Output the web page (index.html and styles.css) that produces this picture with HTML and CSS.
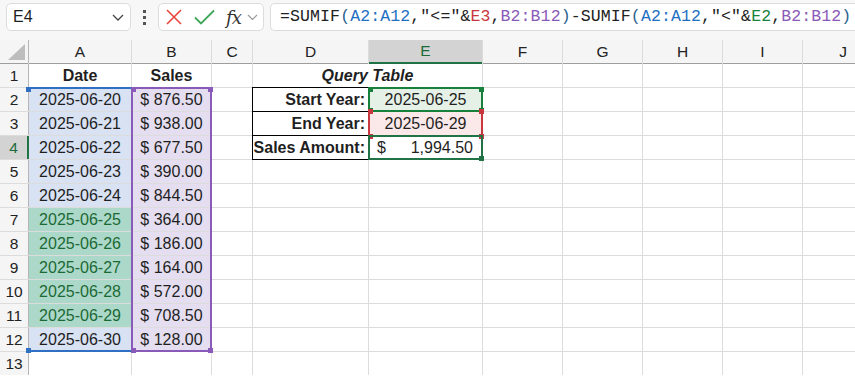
FILE: index.html
```html
<!DOCTYPE html>
<html lang="en">
<head>
    <meta charset="UTF-8">
    <meta name="viewport" content="width=device-width, initial-scale=1.0">
    <title>SUMIF date range</title>
    <link rel="stylesheet" href="styles.css">
</head>
<body>
    <div class="formula-bar">
        <div class="name-box">
            <span>E4</span>
            <svg class="chev" width="12" height="7" viewBox="0 0 12 7"><path d="M1 1l5 5 5-5" fill="none" stroke="#444" stroke-width="1.3"/></svg>
        </div>
        <div class="dots"><i></i><i></i><i></i></div>
        <div class="fx-box">
            <svg width="16" height="16" viewBox="0 0 16 16"><path d="M1 1l14 14M15 1L1 15" stroke="#e8453c" stroke-width="1.6"/></svg>
            <svg width="21" height="16" viewBox="0 0 21 16"><path d="M1 8.5l6 6L20 1.5" fill="none" stroke="#3fa75a" stroke-width="1.8"/></svg>
            <span class="fx">fx</span>
            <svg width="11" height="7" viewBox="0 0 11 7"><path d="M1 1l4.5 4.5L10 1" fill="none" stroke="#999" stroke-width="1.2"/></svg>
        </div>
        <div class="formula">=SUMIF<span class="p">(</span><span class="ref-a">A2:A12</span>,"&lt;="&amp;<span class="ref-e3">E3</span>,<span class="ref-b">B2:B12</span><span class="p">)</span>-SUMIF<span class="p">(</span><span class="ref-a">A2:A12</span>,"&lt;"&amp;<span class="ref-e2">E2</span>,<span class="ref-b">B2:B12</span><span class="p">)</span></div>
    </div>

    <div class="sheet-wrap">
        <div class="sheet">
            <!-- column headers -->
            <div class="hd corner"><svg width="17" height="16" viewBox="0 0 17 16"><path d="M17 0V16H0Z" fill="#bdbdbd"/></svg></div>
            <div class="hd col">A</div>
            <div class="hd col">B</div>
            <div class="hd col">C</div>
            <div class="hd col">D</div>
            <div class="hd col active">E</div>
            <div class="hd col">F</div>
            <div class="hd col">G</div>
            <div class="hd col">H</div>
            <div class="hd col">I</div>
            <div class="hd col">J</div>

            <!-- row 1 -->
            <div class="hd row">1</div>
            <div class="c bold center">Date</div>
            <div class="c bold center">Sales</div>
            <div class="c"></div>
            <div class="c bold italic center span2">Query Table</div>
            <div class="c"></div><div class="c"></div><div class="c"></div><div class="c"></div><div class="c"></div>

            <!-- row 2 -->
            <div class="hd row">2</div>
            <div class="c date">2025-06-20</div>
            <div class="c sale">$ 876.50</div>
            <div class="c"></div>
            <div class="c label">Start Year:</div>
            <div class="c center start">2025-06-25</div>
            <div class="c"></div><div class="c"></div><div class="c"></div><div class="c"></div><div class="c"></div>

            <!-- row 3 -->
            <div class="hd row">3</div>
            <div class="c date">2025-06-21</div>
            <div class="c sale">$ 938.00</div>
            <div class="c"></div>
            <div class="c label">End Year:</div>
            <div class="c center end">2025-06-29</div>
            <div class="c"></div><div class="c"></div><div class="c"></div><div class="c"></div><div class="c"></div>

            <!-- row 4 -->
            <div class="hd row active">4</div>
            <div class="c date">2025-06-22</div>
            <div class="c sale">$ 677.50</div>
            <div class="c"></div>
            <div class="c label">Sales Amount:</div>
            <div class="c money"><span>$</span><span>1,994.50</span></div>
            <div class="c"></div><div class="c"></div><div class="c"></div><div class="c"></div><div class="c"></div>

            <!-- row 5 -->
            <div class="hd row">5</div>
            <div class="c date">2025-06-23</div>
            <div class="c sale">$ 390.00</div>
            <div class="c"></div><div class="c"></div><div class="c"></div><div class="c"></div><div class="c"></div><div class="c"></div><div class="c"></div><div class="c"></div>

            <!-- row 6 -->
            <div class="hd row">6</div>
            <div class="c date">2025-06-24</div>
            <div class="c sale">$ 844.50</div>
            <div class="c"></div><div class="c"></div><div class="c"></div><div class="c"></div><div class="c"></div><div class="c"></div><div class="c"></div><div class="c"></div>

            <!-- row 7 -->
            <div class="hd row">7</div>
            <div class="c date hit">2025-06-25</div>
            <div class="c sale">$ 364.00</div>
            <div class="c"></div><div class="c"></div><div class="c"></div><div class="c"></div><div class="c"></div><div class="c"></div><div class="c"></div><div class="c"></div>

            <!-- row 8 -->
            <div class="hd row">8</div>
            <div class="c date hit">2025-06-26</div>
            <div class="c sale">$ 186.00</div>
            <div class="c"></div><div class="c"></div><div class="c"></div><div class="c"></div><div class="c"></div><div class="c"></div><div class="c"></div><div class="c"></div>

            <!-- row 9 -->
            <div class="hd row">9</div>
            <div class="c date hit">2025-06-27</div>
            <div class="c sale">$ 164.00</div>
            <div class="c"></div><div class="c"></div><div class="c"></div><div class="c"></div><div class="c"></div><div class="c"></div><div class="c"></div><div class="c"></div>

            <!-- row 10 -->
            <div class="hd row">10</div>
            <div class="c date hit">2025-06-28</div>
            <div class="c sale">$ 572.00</div>
            <div class="c"></div><div class="c"></div><div class="c"></div><div class="c"></div><div class="c"></div><div class="c"></div><div class="c"></div><div class="c"></div>

            <!-- row 11 -->
            <div class="hd row">11</div>
            <div class="c date hit">2025-06-29</div>
            <div class="c sale">$ 708.50</div>
            <div class="c"></div><div class="c"></div><div class="c"></div><div class="c"></div><div class="c"></div><div class="c"></div><div class="c"></div><div class="c"></div>

            <!-- row 12 -->
            <div class="hd row">12</div>
            <div class="c date">2025-06-30</div>
            <div class="c sale">$ 128.00</div>
            <div class="c"></div><div class="c"></div><div class="c"></div><div class="c"></div><div class="c"></div><div class="c"></div><div class="c"></div><div class="c"></div>

            <!-- row 13 -->
            <div class="hd row">13</div>
            <div class="c"></div><div class="c"></div><div class="c"></div><div class="c"></div><div class="c"></div><div class="c"></div><div class="c"></div><div class="c"></div><div class="c"></div><div class="c"></div>
        </div>

        <!-- formula reference highlights, drawn over the cells -->
        <div class="overlay">
            <div class="range range-a"><i class="tl"></i><i class="bl"></i></div>
            <div class="range range-b"><i class="tl"></i><i class="tr"></i><i class="bl"></i><i class="br"></i></div>
            <div class="range range-e2"><i class="tl"></i><i class="tr"></i><i class="bl"></i><i class="br"></i></div>
            <div class="range range-e3"><i class="tl"></i><i class="tr"></i><i class="bl"></i><i class="br"></i></div>
            <div class="range range-e4"><i class="br"></i></div>
        </div>
    </div>
</body>
</html>
```

FILE: styles.css
```css
body {
    margin: 0;
    padding: 0;
    width: 855px;
    height: 379px;
    overflow: hidden;
    background-color: #ffffff;
    font-family: "Liberation Sans", Arial, sans-serif;
    color: #1f1f1f;
}

/* formula bar */

.formula-bar {
    height: 40px;
    display: flex;
    align-items: flex-start;
    padding: 3px 0 0 6px;
    box-sizing: border-box;
    background-color: #f7f7f7;
    white-space: nowrap;
}

.name-box {
    width: 125px;
    height: 28px;
    box-sizing: border-box;
    border: 1px solid #dcdcdc;
    border-radius: 5px;
    background-color: #fff;
    display: flex;
    align-items: center;
    justify-content: space-between;
    padding: 0 6px 0 6px;
    font-size: 16px;
}

.dots {
    width: 27px;
    height: 28px;
    display: flex;
    flex-direction: column;
    align-items: center;
    justify-content: center;
    gap: 3px;
}

.dots i {
    display: block;
    width: 3px;
    height: 3px;
    background-color: #555;
}

.fx-box {
    width: 106px;
    height: 28px;
    box-sizing: border-box;
    border: 1px solid #dcdcdc;
    border-radius: 5px;
    background-color: #fff;
    display: flex;
    align-items: center;
    padding-left: 7px;
    gap: 12px;
}

.fx-box .fx {
    font-family: "DejaVu Serif", "Liberation Serif", serif;
    font-style: italic;
    font-size: 18px;
    color: #333;
    margin-left: -1px;
    margin-right: -6px;
    letter-spacing: -1px;
}

.formula {
    margin-left: 6px;
    flex: 1;
    height: 28px;
    box-sizing: border-box;
    border: 1px solid #dcdcdc;
    border-right: none;
    border-radius: 5px 0 0 5px;
    background-color: #fff;
    font-family: "Liberation Mono", "DejaVu Sans Mono", monospace;
    font-size: 16.5px;
    letter-spacing: 0.12px;
    line-height: 26px;
    padding-left: 9px;
    color: #222;
    overflow: hidden;
}

.formula .p { color: #2a5f8f; }
.ref-a { color: #1e6fc2; }
.ref-b { color: #8a5ab8; }
.ref-e3 { color: #c8363e; }
.ref-e2 { color: #17823c; }

/* grid */

.sheet-wrap {
    position: relative;
}

.sheet,
.overlay {
    display: grid;
    grid-template-columns: 28px 102px 79px 40px 115px 113px 79px 79px 79px 79px 80px;
    grid-auto-rows: 23px;
    gap: 1px;
}

.sheet {
    background-color: #dcdcdc;
    font-size: 16px;
}

.overlay {
    position: absolute;
    top: 0;
    left: 0;
    pointer-events: none;
}

.hd {
    background-color: #f5f5f5;
    display: flex;
    align-items: center;
    justify-content: center;
    font-size: 15.5px;
    color: #222;
}

.hd.col {
    box-shadow: 0 1px 0 #9e9e9e;
}

.hd.row {
    box-shadow: 1px 0 0 #b5b5b5;
}

.corner {
    box-shadow: 0 1px 0 #9e9e9e, 1px 0 0 #b5b5b5;
    align-items: flex-end;
    justify-content: flex-end;
    padding: 0 3px 3px 0;
    box-sizing: border-box;
}

.corner svg {
    display: block;
}

.hd.col.active {
    background-color: #d3d3d3;
    color: #1e6b3a;
    box-shadow: 0 1px 0 #217346;
    border-bottom: 1px solid #217346;
}

.hd.row.active {
    background-color: #d3d3d3;
    color: #1e6b3a;
    box-shadow: 1px 0 0 #217346;
    border-right: 1px solid #217346;
}

.c {
    background-color: #fff;
    display: flex;
    align-items: center;
    white-space: nowrap;
    overflow: hidden;
}

.center { justify-content: center; }
.bold { font-weight: bold; }
.italic { font-style: italic; }
.span2 { grid-column: span 2; }

.date {
    background-color: #d9e2f3;
    justify-content: center;
}

.date.hit {
    background-color: #acd8ca;
    color: #1b6a34;
}

.sale {
    background-color: #e4def0;
    justify-content: center;
}

.label {
    font-weight: bold;
    justify-content: flex-end;
    padding-right: 3px;
    box-shadow: 0 0 0 1px #000;
}

.start { background-color: #e5f0e7; }
.end { background-color: #fbe9e9; }

.money {
    justify-content: space-between;
    padding: 0 9px 0 8px;
}

/* formula reference highlights */

.range {
    position: relative;
    margin: -1px;
}

.range i {
    position: absolute;
    width: 5px;
    height: 5px;
}

.range .tl { left: -2px; top: -2px; }
.range .tr { right: -3px; top: -2px; }
.range .bl { left: -2px; bottom: -3px; }
.range .br { right: -3px; bottom: -3px; }

.range-a {
    grid-column: 2;
    grid-row: 3 / 14;
    border-top: 2px solid #2f6fc4;
    border-bottom: 2px solid #2f6fc4;
}

.range-a i { background-color: #2f6fc4; }

.range-b {
    grid-column: 3;
    grid-row: 3 / 14;
    border: 2px solid #8a5ab8;
}

.range-b i { background-color: #8a5ab8; }

.range-e2 {
    grid-column: 6;
    grid-row: 3;
    border: 2px solid #17803a;
}

.range-e2 i { background-color: #17803a; }

.range-e3 {
    grid-column: 6;
    grid-row: 4;
    border-left: 2px solid #c8363e;
    border-right: 2px solid #c8363e;
}

.range-e3 i { background-color: #c8363e; }

.range-e4 {
    grid-column: 6;
    grid-row: 5;
    border: 2px solid #217346;
}

.range-e4 i { background-color: #217346; }
```
